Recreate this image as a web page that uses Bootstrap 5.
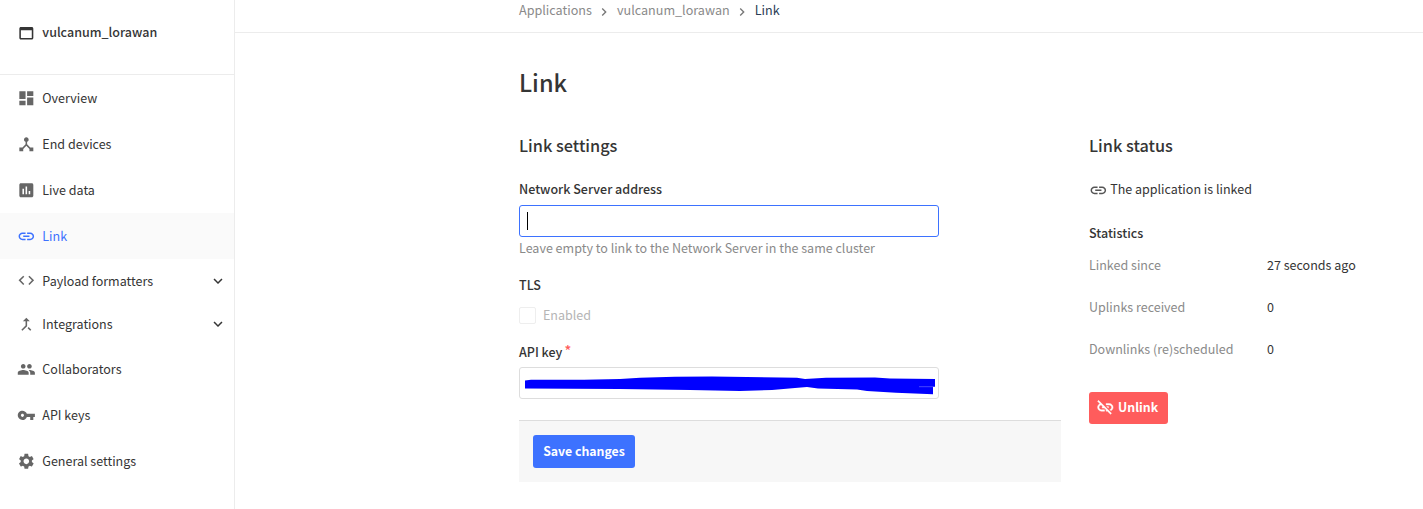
<!DOCTYPE html>
<html lang="en">
<head>
<meta charset="utf-8">
<meta name="viewport" content="width=device-width, initial-scale=1">
<title>Link - vulcanum_lorawan</title>
<link href="https://cdn.jsdelivr.net/npm/bootstrap@5.3.0/dist/css/bootstrap.min.css" rel="stylesheet">
<style>
  :root { --ink: #353535; --muted: #8a8a8a; --line: #ececec; --blue: #3d72ff; --red: #ff5c5c; }
  body { font-family: "Source Sans Pro", "Noto Sans CJK SC", sans-serif; font-size: 12.53px; line-height: 20px; color: var(--ink); background: #fff; height: 509px; overflow: hidden; }
  .ico { width: 18.66px; height: 18.66px; fill: currentColor; flex: none; display: block; }
  .sidebar { width: 235px; border-right: 1px solid var(--line); flex: none; }
  .side-title { height: 75px; padding: 0 0 9px 16.67px; border-bottom: 1px solid var(--line); font-weight: 500; gap: 7px; }
  .side-title span { padding-bottom: 2px; }
  .side-title .ico { margin-top: 1px; }
  .side-nav .nav-link { height: 46px; padding: 0 7px 0 16.67px; gap: 7px; color: var(--ink); }
  .side-nav .nav-link > .ico:first-child { color: #666; }
  .side-nav .nav-link.fold { height: 43.5px; }
  .side-nav .nav-link.active, .side-nav .nav-link.active > .ico:first-child { color: var(--blue); }
  .side-nav .nav-link.active { background: #fafafa; }
  .side-nav .chev { width: 18px; height: 18px; }
  .crumbs { height: 33px; padding: 0 0 12px 284px; border-bottom: 1px solid var(--line); color: var(--muted); font-size: 12.6px; }
  .crumbs .ico { width: 16px; height: 16px; margin: 3px 4.5px 0; color: #777; }
  .crumb-now { color: #2b3d55; }
  .content { padding-left: 284px; }
  h1 { font-size: 23.5px; line-height: 32px; font-weight: 500; margin: 33px 0 0; }
  h2 { font-size: 16.3px; line-height: 24px; font-weight: 500; margin: 0; }
  .cols { display: grid; grid-template-columns: 542px 300px; column-gap: 28px; margin-top: 35px; }
  .lbl { font-weight: 500; display: block; margin: 0; height: 20px; }
  .lbl-server { margin-top: 22px; }
  .lbl-tls, .lbl-key { margin-top: 17px; }
  .lbl-stats { margin-top: 23px; }
  .req { color: var(--red); position: relative; top: -1px; left: -1px; font-size: 14px; line-height: 1; }
  .field { width: 420px; height: 32px; border: 1px solid #ddd; border-radius: 3px; background: #fff; margin-top: 5px; }
  .field.focused { border-color: var(--blue); padding: 6px 7px; margin-top: 6px; }
  .caret { width: 1px; height: 18px; background: #000; }
  .hint { color: var(--muted); margin-top: 1px; }
  .check-row { gap: 7px; margin-top: 10px; color: #b5b5b5; }
  .chk { width: 17px; height: 17px; border: 1px solid #eee; border-radius: 2px; }
  .bar { height: 62px; border-top: 1px solid #ddd; background: #f7f7f7; padding: 14px; margin-top: 21px; }
  .btn { --bs-btn-font-size: 12.3px; --bs-btn-line-height: 20px; --bs-btn-border-radius: 3px; --bs-btn-border-width: 0; --bs-btn-padding-y: 0; --bs-btn-padding-x: 0; --bs-btn-color: #fff; font-weight: 700; }
  .btn-save { width: 102px; height: 33px; background: var(--blue); padding-bottom: 2px; }
  .btn-unlink { width: 79px; height: 32px; background: var(--red); gap: 3.5px; margin-top: 33px; padding-right: 3px; }
  .btn-unlink span { padding-bottom: 2px; }
  .linked { gap: 2.5px; margin-top: 22px; }
  .linked .ico { margin-top: 2px; color: #555; }
  .stats { padding-top: 12px; }
  .stat { height: 20px; margin-bottom: 22px; }
  .stat dt { width: 178px; font-weight: 400; color: var(--muted); }
  .stat dd { margin: 0; }
</style>
</head>
<body class="d-flex">
<svg class="d-none" xmlns="http://www.w3.org/2000/svg">
  <symbol id="i-link" viewBox="0 0 24 24"><path d="M3.9 12c0-1.71 1.39-3.1 3.1-3.1h4V7H7c-2.76 0-5 2.24-5 5s2.24 5 5 5h4v-1.9H7c-1.71 0-3.1-1.39-3.1-3.1zM8 13h8v-2H8v2zm9-6h-4v1.9h4c1.71 0 3.1 1.39 3.1 3.1s-1.39 3.1-3.1 3.1h-4V17h4c2.76 0 5-2.24 5-5s-2.24-5-5-5z"/></symbol>
  <symbol id="i-down" viewBox="0 0 24 24"><path d="M16.59 8.59L12 13.17 7.41 8.59 6 10l6 6 6-6z"/></symbol>
  <symbol id="i-right" viewBox="0 0 24 24"><path d="M10 6L8.59 7.41 13.17 12l-4.58 4.59L10 18l6-6z"/></symbol>
</svg>

<aside class="sidebar vh-100">
  <div class="side-title d-flex align-items-center">
    <svg class="ico" viewBox="0 0 24 24"><path d="M19 4H5c-1.11 0-2 .9-2 2v12c0 1.1.89 2 2 2h14c1.1 0 2-.9 2-2V6c0-1.1-.89-2-2-2zm0 14H5V8h14v10z"/></svg>
    <span>vulcanum_lorawan</span>
  </div>
  <nav class="side-nav nav flex-column">
    <a class="nav-link d-flex align-items-center" href="#"><svg class="ico" viewBox="0 0 24 24"><path d="M3 13h8V3H3v10zm0 8h8v-6H3v6zm10 0h8V11h-8v10zm0-18v6h8V3h-8z"/></svg><span>Overview</span></a>
    <a class="nav-link d-flex align-items-center" href="#"><svg class="ico" viewBox="0 0 24 24"><path d="M17 16l-4-4V8.82C14.16 8.4 15 7.3 15 6c0-1.66-1.34-3-3-3S9 4.34 9 6c0 1.3.84 2.4 2 2.82V12l-4 4H3v5h5v-3.05l4-4.2 4 4.2V21h5v-5h-4z"/></svg><span>End devices</span></a>
    <a class="nav-link d-flex align-items-center" href="#"><svg class="ico" viewBox="0 0 24 24"><path d="M19 3H5c-1.1 0-2 .9-2 2v14c0 1.1.9 2 2 2h14c1.1 0 2-.9 2-2V5c0-1.1-.9-2-2-2zM9 17H7v-7h2v7zm4 0h-2V7h2v10zm4 0h-2v-4h2v4z"/></svg><span>Live data</span></a>
    <a class="nav-link active d-flex align-items-center" href="#"><svg class="ico"><use href="#i-link"/></svg><span>Link</span></a>
    <a class="nav-link fold d-flex align-items-center" href="#"><svg class="ico" viewBox="0 0 24 24"><path d="M9.4 16.6L4.8 12l4.6-4.6L8 6l-6 6 6 6 1.4-1.4zm5.2 0l4.6-4.6-4.6-4.6L16 6l6 6-6 6-1.4-1.4z"/></svg><span>Payload formatters</span><svg class="ico chev ms-auto"><use href="#i-down"/></svg></a>
    <a class="nav-link fold d-flex align-items-center" href="#"><svg class="ico" viewBox="0 0 24 24"><path d="M17 20.41L18.41 19 15 15.59 13.59 17 17 20.41zM7.5 8H11v5.59L5.59 19 7 20.41l6-6V8h3.5L12 3.5 7.5 8z"/></svg><span>Integrations</span><svg class="ico chev ms-auto"><use href="#i-down"/></svg></a>
    <a class="nav-link d-flex align-items-center" href="#"><svg class="ico" viewBox="0 0 24 24"><path d="M16 11c1.66 0 2.99-1.34 2.99-3S17.66 5 16 5c-1.66 0-3 1.34-3 3s1.34 3 3 3zm-8 0c1.66 0 2.99-1.34 2.99-3S9.66 5 8 5C6.34 5 5 6.34 5 8s1.34 3 3 3zm0 2c-2.33 0-7 1.17-7 3.5V19h14v-2.5c0-2.33-4.67-3.5-7-3.5zm8 0c-.29 0-.62.02-.97.05 1.16.84 1.97 1.97 1.97 3.45V19h6v-2.5c0-2.33-4.67-3.5-7-3.5z"/></svg><span>Collaborators</span></a>
    <a class="nav-link d-flex align-items-center" href="#"><svg class="ico" viewBox="0 0 24 24"><path d="M12.65 10C11.83 7.67 9.61 6 7 6c-3.31 0-6 2.69-6 6s2.69 6 6 6c2.61 0 4.83-1.67 5.65-4H17v4h4v-4h2v-4H12.65zM7 14c-1.1 0-2-.9-2-2s.9-2 2-2 2 .9 2 2-.9 2-2 2z"/></svg><span>API keys</span></a>
    <a class="nav-link d-flex align-items-center" href="#"><svg class="ico" viewBox="0 0 24 24"><path d="M19.14 12.94c.04-.3.06-.61.06-.94 0-.32-.02-.64-.07-.94l2.03-1.58c.18-.14.23-.41.12-.61l-1.92-3.32c-.12-.22-.37-.29-.59-.22l-2.39.96c-.5-.38-1.03-.7-1.62-.94l-.36-2.54c-.04-.24-.24-.41-.48-.41h-3.84c-.24 0-.43.17-.47.41l-.36 2.54c-.59.24-1.13.57-1.62.94l-2.39-.96c-.22-.08-.47 0-.59.22L2.74 8.87c-.12.21-.08.47.12.61l2.03 1.58c-.05.3-.09.63-.09.94s.02.64.07.94l-2.03 1.58c-.18.14-.23.41-.12.61l1.92 3.32c.12.22.37.29.59.22l2.39-.96c.5.38 1.03.7 1.62.94l.36 2.54c.05.24.24.41.48.41h3.84c.24 0 .44-.17.47-.41l.36-2.54c.59-.24 1.13-.56 1.62-.94l2.39.96c.22.08.47 0 .59-.22l1.92-3.32c.12-.22.07-.47-.12-.61l-2.01-1.58zM12 15.6c-1.98 0-3.6-1.62-3.6-3.6s1.62-3.6 3.6-3.6 3.6 1.62 3.6 3.6-1.62 3.6-3.6 3.6z"/></svg><span>General settings</span></a>
  </nav>
</aside>

<main class="flex-grow-1">
  <div class="crumbs d-flex align-items-center">
    <span>Applications</span><svg class="ico"><use href="#i-right"/></svg><span>vulcanum_lorawan</span><svg class="ico"><use href="#i-right"/></svg><span class="crumb-now">Link</span>
  </div>
  <div class="content">
    <h1>Link</h1>
    <div class="cols">
      <form>
        <h2>Link settings</h2>
        <label class="lbl lbl-server">Network Server address</label>
        <div class="field focused"><div class="caret"></div></div>
        <div class="hint">Leave empty to link to the Network Server in the same cluster</div>
        <label class="lbl lbl-tls">TLS</label>
        <div class="check-row d-flex align-items-center"><span class="chk"></span><span>Enabled</span></div>
        <label class="lbl lbl-key">API key<span class="req"> *</span></label>
        <div class="field">
          <svg class="d-block" width="418" height="30" viewBox="520 368 418 30"><path fill="#00f" d="M525 380.500L531 379.700L584 379.800L620 379L640 377.800L675 376.700L712 376.500L797 377.700L805 379L826 377.700L875 377.400L890 378.400L935 379V386.700H933V394.300L896 392.700L867 391L857 389.500L818 388.500L807 387L795 388L772 390L740 391L690 390L620 389L525 388.600Z"/><path stroke="#88f" stroke-width=".5" d="M919 386.700h14"/></svg>
        </div>
        <div class="bar"><button type="button" class="btn btn-save">Save changes</button></div>
      </form>
      <section>
        <h2>Link status</h2>
        <div class="linked d-flex align-items-center"><svg class="ico"><use href="#i-link"/></svg><span>The application is linked</span></div>
        <div class="lbl lbl-stats">Statistics</div>
        <dl class="stats m-0">
          <div class="stat d-flex"><dt>Linked since</dt><dd>27 seconds ago</dd></div>
          <div class="stat d-flex"><dt>Uplinks received</dt><dd>0</dd></div>
          <div class="stat d-flex mb-0"><dt>Downlinks (re)scheduled</dt><dd>0</dd></div>
        </dl>
        <button type="button" class="btn btn-unlink d-flex align-items-center justify-content-center"><svg class="ico" viewBox="0 0 24 24" stroke="currentColor" stroke-width=".5"><path d="M17 7h-4v1.900h4c1.710 0 3.100 1.390 3.100 3.100 0 1.430-.98 2.630-2.310 2.980l1.460 1.460C20.880 15.610 22 13.950 22 12c0-2.760-2.240-5-5-5zm-1 4h-2.190l2 2H16zM2 4.270l3.110 3.110C3.290 8.120 2 9.910 2 12c0 2.760 2.240 5 5 5h4v-1.900H7c-1.710 0-3.100-1.390-3.100-3.100 0-1.590 1.210-2.900 2.760-3.070L8.730 11H8v2h2.730L13 15.270V17h1.730l4.010 4L20 19.740 3.270 3 2 4.270z"/></svg><span>Unlink</span></button>
      </section>
    </div>
  </div>
</main>
<script src="https://cdn.jsdelivr.net/npm/bootstrap@5.3.0/dist/js/bootstrap.bundle.min.js"></script>
</body>
</html>
